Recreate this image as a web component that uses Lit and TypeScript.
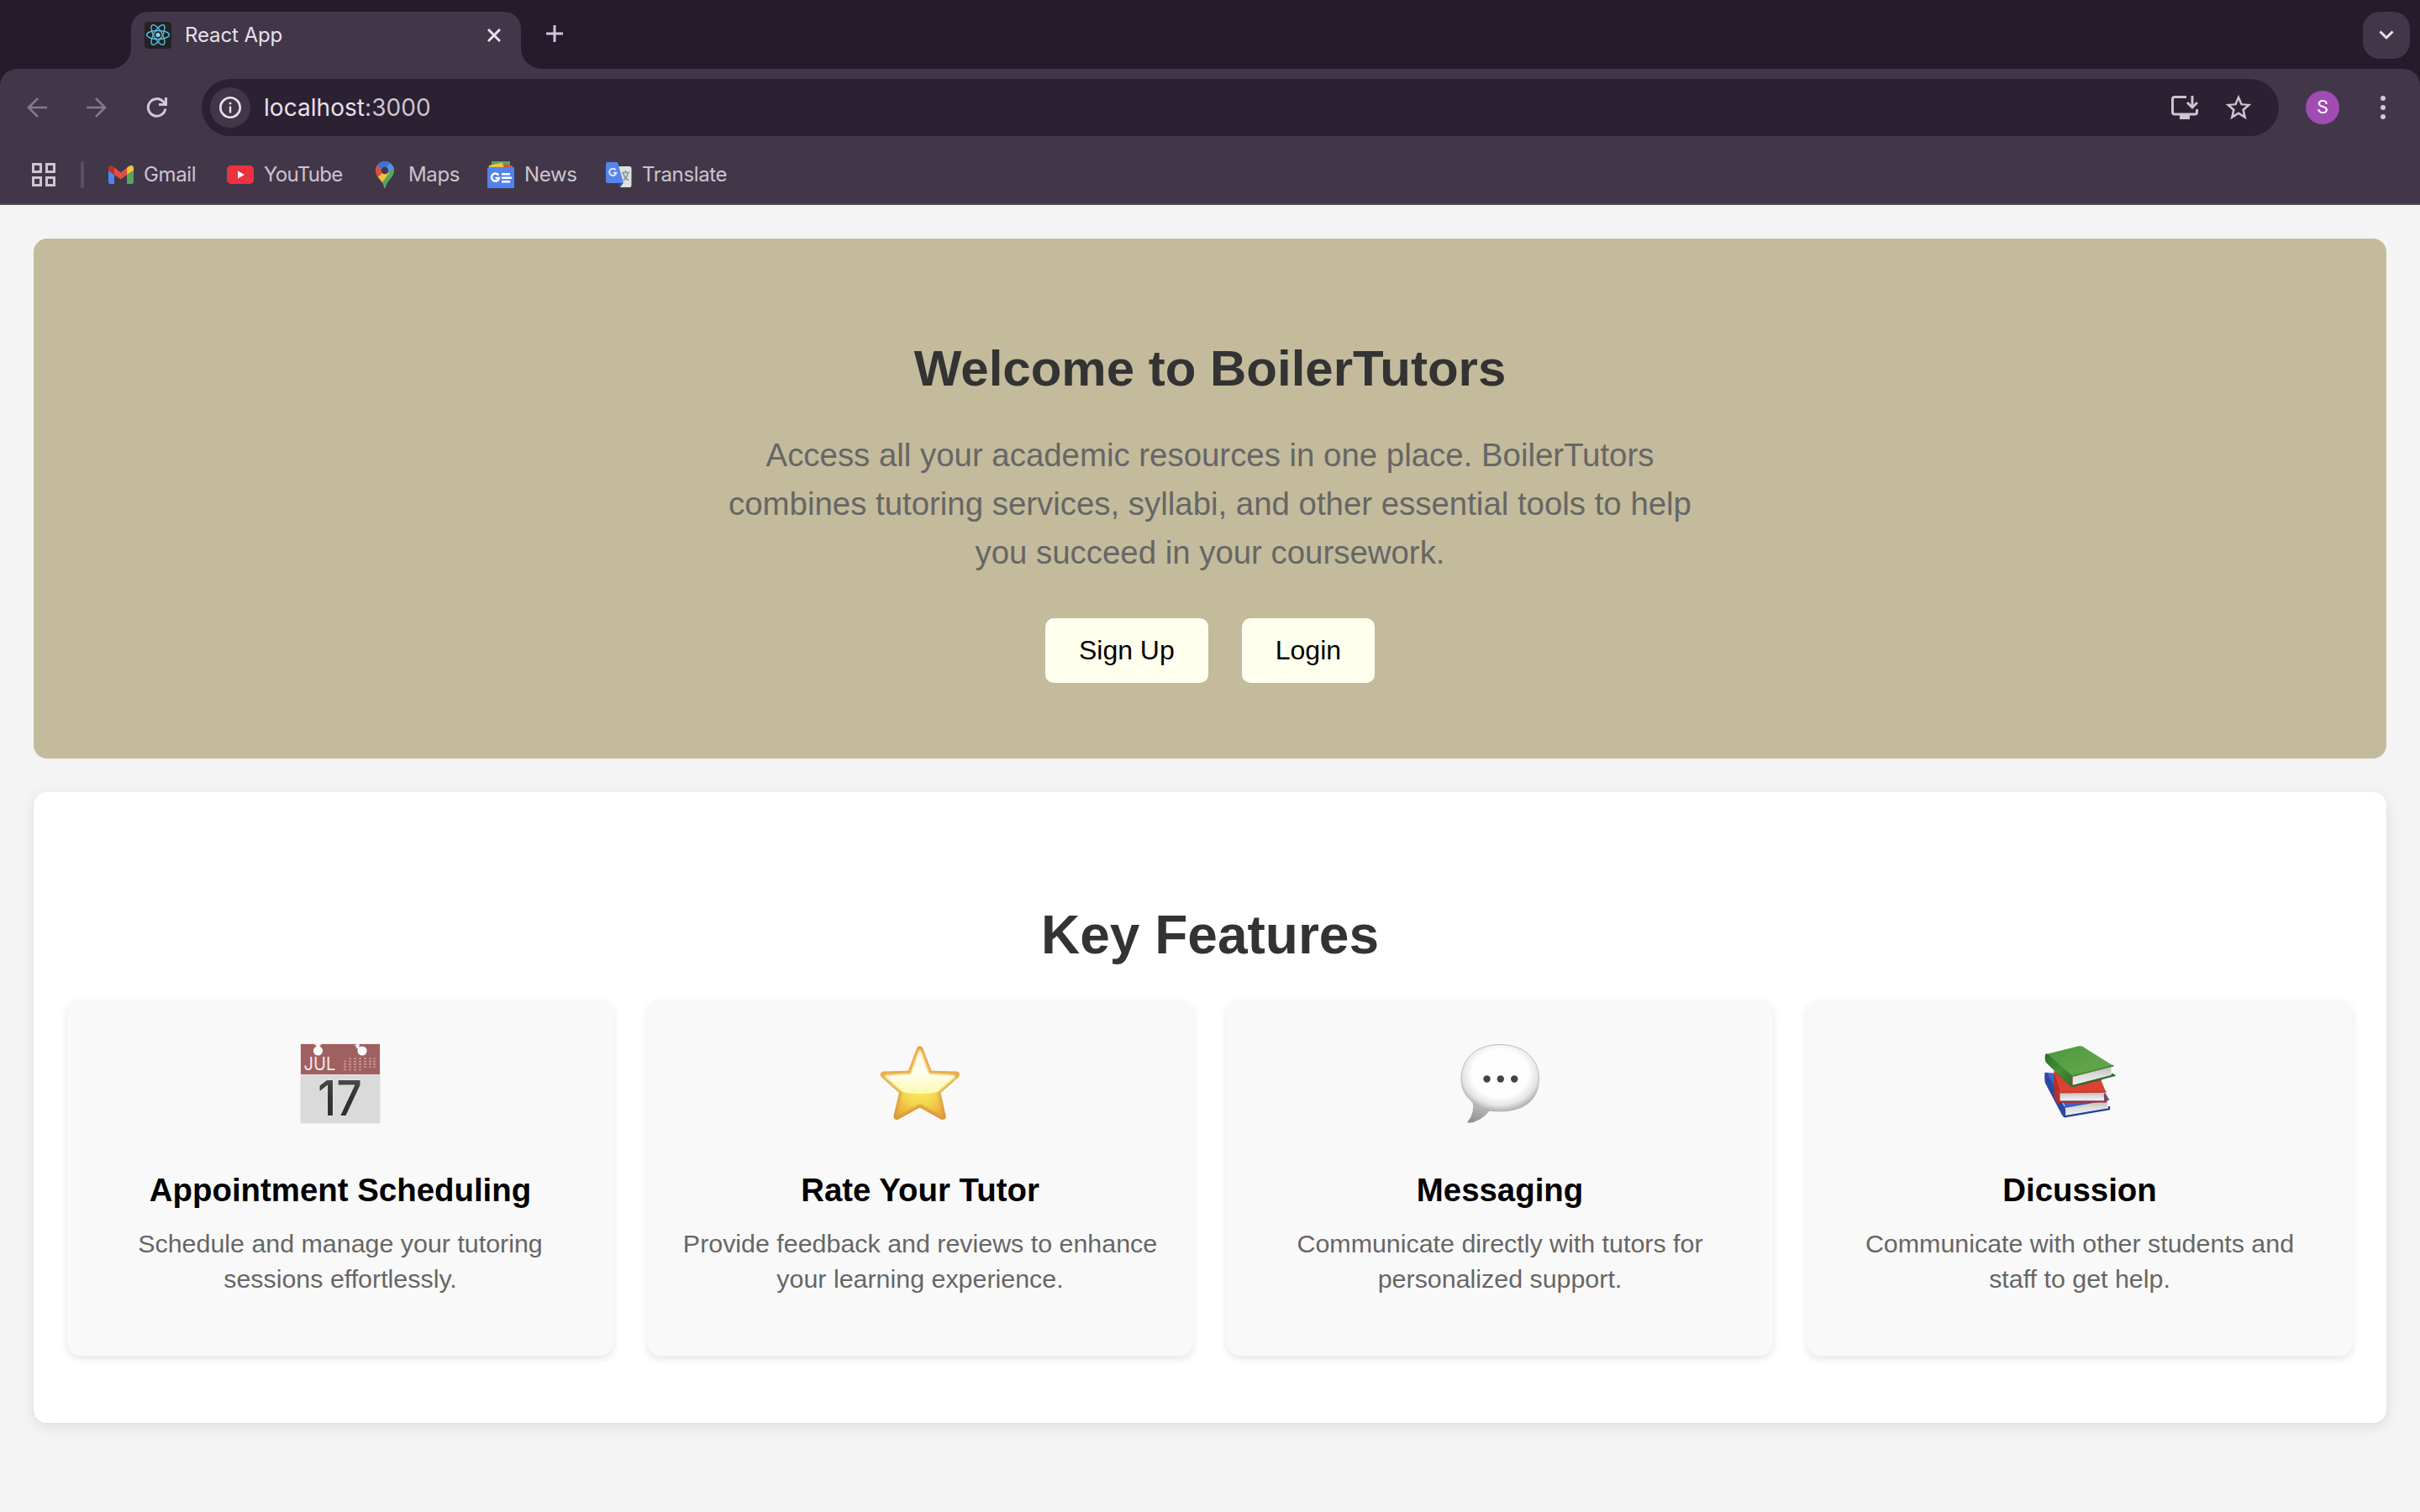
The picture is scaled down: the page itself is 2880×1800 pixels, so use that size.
import { LitElement, html, css, svg } from "lit";
import { customElement, property } from "lit/decorators.js";

const ICONS: Record<string, unknown> = {
  react: svg`<svg width="32" height="32" viewBox="0 0 32 32">
    <rect width="32" height="32" rx="4" fill="#222"/>
    <g fill="none" stroke="#61c5e8" stroke-width="1.3">
      <ellipse cx="16" cy="15.5" rx="13.4" ry="5"/>
      <ellipse cx="16" cy="15.5" rx="13.4" ry="5" transform="rotate(60 16 15.5)"/>
      <ellipse cx="16" cy="15.5" rx="13.4" ry="5" transform="rotate(120 16 15.5)"/>
    </g><circle cx="16" cy="15.5" r="2.6" fill="#7cd5f4"/></svg>`,
  close: svg`<svg width="16" height="16" viewBox="0 0 16 16" stroke="#e9e0ea" stroke-width="3" fill="none"><path d="M1 1L15 15M15 1L1 15"/></svg>`,
  plus: svg`<svg width="20" height="20" viewBox="0 0 20 20" stroke="#d2c5dc" stroke-width="3" fill="none"><path d="M10 0V20M0 10H20"/></svg>`,
  chevron: svg`<svg width="18" height="12" viewBox="0 0 18 12" stroke="#e9e0ea" stroke-width="3" fill="none"><path d="M1.5 1.5L9 9L16.500 1.500"/></svg>`,
  back: svg`<svg width="24" height="24" viewBox="0 0 24 24" stroke="#85798c" stroke-width="2.600" fill="none"><path d="M24 12H2M13 1L2 12L13 23"/></svg>`,
  forward: svg`<svg width="24" height="24" viewBox="0 0 24 24" stroke="#85798c" stroke-width="2.600" fill="none"><path d="M0 12H22M11 1L22 12L11 23"/></svg>`,
  reload: svg`<svg width="26" height="26" viewBox="0 0 26 26" fill="none" stroke="#d2c5dc" stroke-width="3"><path d="M22.800 14.500A10.300 10.300 0 1 1 20 5.700L23.500 9"/><path d="M23.500 1V9.500H15"/></svg>`,
  info: svg`<svg width="28" height="28" viewBox="0 0 28 28" fill="none" stroke="#e9e0ea"><circle cx="14" cy="14" r="11.700" stroke-width="2.600"/><path d="M14 12.500V20.500" stroke-width="2.400"/><path d="M14 7.800V10.300" stroke-width="2.600"/></svg>`,
  install: svg`<svg width="32" height="30" viewBox="0 0 32 30" fill="none" stroke="#cdc4cf" stroke-width="3"><path d="M18 2.500H4Q1.500 2.500 1.500 5V20.500Q1.500 23 4 23H28Q30.500 23 30.500 20.500V17"/><path d="M25 1V14M19 9L25 15L31 9"/><path d="M10 24H22V29H10Z" fill="#cdc4cf" stroke="none"/></svg>`,
  star: svg`<svg width="34" height="34" viewBox="0 0 24 24" fill="#cdc4cf"><path d="M22.800 9.240l-7.640-.66L12 1.300 8.840 8.590 1.200 9.240l5.800 5.030L5.270 22 12 17.870 18.730 22l-1.730-7.730 5.800-5.030zM12 15.700l-4.070 2.460 1.080-4.630-3.590-3.110 4.740-.41L12 5.650l1.850 4.370 4.740.41-3.590 3.110 1.080 4.630L12 15.700z"/></svg>`,
  dots: svg`<svg width="6" height="28" viewBox="0 0 6 28" fill="#d2c5dc"><circle cx="3" cy="3" r="3"/><circle cx="3" cy="14" r="3"/><circle cx="3" cy="25" r="3"/></svg>`,
  apps: svg`<svg width="28" height="28" viewBox="0 0 28 28" fill="none" stroke="#cdc4cf" stroke-width="3"><path d="M1.500 1.500h9v9h-9zM17.500 1.500h9v9h-9zM1.500 17.500h9v9h-9zM17.500 17.500h9v9h-9z"/></svg>`,
  gmail: svg`<svg width="30" height="22" viewBox="0 0 30 22"><path d="M0 6L7 11V22H2Q0 22 0 20Z" fill="#4f86ee"/><path d="M30 6L22 11V22H27.500Q30 22 30 20Z" fill="#57a65a"/><path d="M0 6V3Q0 0 3 0Q4.200 0 5.200.8L7 2.200V11Z" fill="#b5332a"/><path d="M30 6V3Q30 0 27 0Q25.500 0 24.500.8L22 2.800V11Z" fill="#f3c13d"/><path d="M7 2.200L14.700 8.300L22 2.800V11L14.700 16.500L7 11Z" fill="#dc5040"/></svg>`,
  youtube: svg`<svg width="32" height="22" viewBox="0 0 32 22"><rect width="32" height="22" rx="5" fill="#eb323f"/><path d="M13 6.500L21 11L13 15.500Z" fill="#fff"/></svg>`,
  maps: svg`<svg width="22" height="32" viewBox="0 0 22 32"><defs><clipPath id="pin"><path d="M11 0C17 0 22 5 22 11C22 19 13.500 22 11.800 31Q11 33 10.200 31C8.500 22 0 19 0 11C0 5 5 0 11 0Z"/></clipPath></defs><g clip-path="url(#pin)"><rect width="22" height="32" fill="#57a65a"/><path d="M-2 22L11 7L17 14L6 27Z" fill="#f3c13d"/><path d="M-2 2L3 4L11 11L0 22L-2 16Z" fill="#dc5040"/><path d="M2 4L11 -2L18 1L9 12Z" fill="#3b72de"/><path d="M11 11L18 1L24 3V5L14 15Z" fill="#5a8df2"/><path d="M22 5V32H6L10 23Z" fill="#57a65a"/></g><circle cx="11" cy="11" r="4.200" fill="#413749"/></svg>`,
  news: svg`<svg width="32" height="32" viewBox="0 0 32 32"><path d="M5 0H27V8H5Z" fill="#57a65a"/><path d="M18 3L30 5.500V9H18Z" fill="#dc5040"/><path d="M2 5L18 1.500L20 8H2Z" fill="#f3c13d"/><rect y="7" width="32" height="25" rx="1" fill="#5183ee"/><path d="M13.300 16.500A4.500 4.500 0 1 0 14 20H9.500" fill="none" stroke="#fff" stroke-width="2.400"/><path d="M17 15.300H27M17 19.800H29M17 24.200H27" stroke="#fff" stroke-width="2.500"/></svg>`,
  translate: svg`<svg width="32" height="32" viewBox="0 0 32 32"><path d="M12 6H29Q31.500 6 31.500 8V29Q31.500 31 29.500 31H18Z" fill="#dfe0df"/><path d="M20 13.500H29M24.500 11V13.500M21.500 13.500Q23 20 28 22.500M27.500 13.500Q26 20 21.500 23" fill="none" stroke="#8b9698" stroke-width="1.700"/><path d="M16 25.500H22L18 31Z" fill="#3248ae"/><path d="M3 1H15L22 26H3Q1 26 1 24V3Q1 1 3 1Z" fill="#5585ea"/><path d="M12.700 10.300A4.200 4.200 0 1 0 13.500 13.800H9.800" fill="none" stroke="#dfe8fb" stroke-width="1.900"/></svg>`,
};

const miniDays = [
  [0, 3], [6, 0], [12, 0], [18, 0], [24, 0], [30, 0], [35, 0],
].map(([x, y], c) => svg`<path d="M${53.500 + x} ${17.500 + y}V${c > 3 ? 30 : 33}" stroke="#d3a9a8" stroke-width="2.200" stroke-dasharray="1.600 1.700"/>`);

const ART: Record<string, unknown> = {
  calendar: svg`<svg width="96" height="96" viewBox="0 0 96 96">
    <defs><linearGradient id="num" x1="0" y1="0" x2="0" y2="1"><stop offset="0" stop-color="#555"/><stop offset=".5" stop-color="#333"/><stop offset="1" stop-color="#2e2e2e"/></linearGradient></defs>
    <rect x="0.500" y="0.500" width="95" height="95" fill="#e8e0e0"/>
    <rect x="1" y="1" width="94" height="36" fill="#a06060"/>
    <rect x="1" y="38" width="94" height="56.500" fill="#dadada"/>
    <circle cx="21.500" cy="9" r="5.600" fill="#fcfcfc"/><path d="M19.500 0H23.500V5H19.500ZM17.500 1.200H25.500V2.500H17.500Z" fill="#fcfcfc"/>
    <circle cx="74" cy="9" r="5.600" fill="#fcfcfc"/><path d="M67 0H70.500V6H67ZM64 2L70 1.500V5Z" fill="#fcfcfc"/>
    ${miniDays}
    <text x="4.500" y="32" font-family="Inter, sans-serif" font-size="21.500" font-weight="400" fill="#f1e7e7" textLength="38" lengthAdjust="spacingAndGlyphs">JUL</text>
    <text x="21" y="86" font-family="Inter, sans-serif" font-size="57" font-weight="500" fill="url(#num)" stroke="#eee" stroke-width="1" paint-order="stroke" textLength="53" lengthAdjust="spacingAndGlyphs">17</text></svg>`,
  star: svg`<svg width="96" height="96" viewBox="0 0 96 96">
    <defs><linearGradient id="sg" gradientUnits="userSpaceOnUse" x1="0" y1="3" x2="0" y2="92"><stop offset="0" stop-color="#f0a444"/><stop offset=".4" stop-color="#e9b04a"/><stop offset=".62" stop-color="#dfb344"/><stop offset="1" stop-color="#d9963a"/></linearGradient>
    <linearGradient id="si" gradientUnits="userSpaceOnUse" x1="0" y1="8" x2="0" y2="60"><stop offset="0" stop-color="#fffbe0"/><stop offset=".5" stop-color="#fffff2"/><stop offset="1" stop-color="#fdf8ae"/></linearGradient>
    <radialGradient id="sl" gradientUnits="userSpaceOnUse" cx="47.700" cy="55" r="40"><stop offset="0" stop-color="#fbe95e"/><stop offset=".45" stop-color="#f5d850"/><stop offset="1" stop-color="#eba33c"/></radialGradient>
    <clipPath id="sc"><path d="M0 0H96V50Q72 60 47.700 60Q24 60 0 50Z"/></clipPath>
    <filter id="sb"><feGaussianBlur stdDeviation="1.300"/></filter></defs>
    <path d="M47.700 7.500L58.700 36.500L91 37.500L68.200 57.500L74.700 87L47.700 72L20.500 87L27.300 57.500L4.800 37.500L36.800 36.500Z" fill="url(#sg)" stroke="url(#sg)" stroke-width="8" stroke-linejoin="round"/>
    <path d="M47.700 10L57.500 38L89 38.500L67 57.500L73.500 85L47.700 70.500L21.700 85L28.300 57.500L7 38.500L38 38Z" fill="url(#sl)" stroke="url(#sl)" stroke-width="3" stroke-linejoin="round" filter="url(#sb)"/>
    <g clip-path="url(#sc)"><path d="M47.700 10L57.500 38L88 39.500L66 58L47.700 66L29.500 58L8 39.500L38 38Z" fill="url(#si)" stroke="url(#si)" stroke-width="3.600" stroke-linejoin="round" filter="url(#sb)"/></g></svg>`,
  message: svg`<svg width="96" height="96" viewBox="0 0 96 96">
    <defs><radialGradient id="mb" cx=".5" cy=".43" r=".59"><stop offset="0" stop-color="#fff"/><stop offset=".62" stop-color="#fdfdfd"/><stop offset=".82" stop-color="#e4e4e4"/><stop offset="1" stop-color="#a6a6a6"/></radialGradient>
    <linearGradient id="mt" x1=".6" y1="0" x2=".3" y2="1"><stop offset="0" stop-color="#c8c8c8"/><stop offset="1" stop-color="#8e8e8e"/></linearGradient></defs>
    <path d="M15 68Q19 82 9.500 93.500Q8.500 95 11 94.800Q25 94 37 79Z" fill="url(#mt)"/>
    <path d="M48 1.500C77 1.500 94.500 19 94.500 42C94.500 68 76 81 48 81C44 81 40 81 36 80.300C27 78 21 75 15.500 70C6 62 2 53 2 42C2 19 19 1.500 48 1.500Z" fill="url(#mb)" stroke="#b0b0b0" stroke-width=".8"/>
    <g fill="#434343"><circle cx="32.500" cy="42.500" r="4.200"/><circle cx="48.800" cy="42.500" r="4.200"/><circle cx="65.200" cy="42.500" r="4.200"/></g></svg>`,
  books: svg`<svg width="96" height="96" viewBox="0 0 96 96">
    <defs><linearGradient id="bg" x1="0" y1="0" x2="1" y2="1"><stop offset="0" stop-color="#4c9a3c"/><stop offset="1" stop-color="#6aa852"/></linearGradient>
    <linearGradient id="bs" x1="0" y1="0" x2="1" y2="1"><stop offset="0" stop-color="#2f6b28"/><stop offset=".5" stop-color="#458f38"/><stop offset="1" stop-color="#2f6b28"/></linearGradient>
    <linearGradient id="bp" x1="0" y1="0" x2="0" y2="1"><stop offset="0" stop-color="#bdbdbd"/><stop offset=".5" stop-color="#dedede"/><stop offset="1" stop-color="#f2f2f2"/></linearGradient></defs>
    <path d="M7 34.700L22 36L79 59.700L83 67.300L31.300 76.300Z" fill="#4263c8"/>
    <path d="M31.500 76L81 67.500V78L31.500 87Z" fill="url(#bp)"/>
    <path d="M6.300 36Q6.500 34.500 9 34.700L29 74Q32 76 31 88Q28.500 88.500 27 85.500L7 47.500Q6 45 6.300 36Z" fill="#2d499f"/>
    <path d="M30 76L83 66.800" stroke="#3b5cc2" stroke-width="2" fill="none"/><path d="M29.500 87.300L83 78.300V75" stroke="#233d99" stroke-width="2.200" fill="none"/>
    <path d="M17.300 33L60 40L73 43L79 57.500L23 58.500Z" fill="#da4233"/>
    <path d="M22.500 58.500H77V68.500H22.500Z" fill="url(#bp)"/>
    <path d="M17.300 33L24.500 57V69.800Q20.500 70.500 18.800 67Q17 62 17.300 33Z" fill="#b32f27"/>
    <path d="M22 58.300L79.500 57.600" stroke="#cf3b2e" stroke-width="2.200"/><path d="M20.500 69.800L79 69.300V64L77 62" stroke="#b22d26" stroke-width="2.300" fill="none"/>
    <path d="M19 36L40 51L76 44L73 42L60 34Z" fill="#7c1d18" opacity=".35"/>
    <path d="M8 13L47 3.300Q49.500 2.800 52 4.200L88.300 27L39.700 39.500Z" fill="url(#bg)"/>
    <path d="M39.700 39.500L85.500 27.500V38L39.700 50.500Z" fill="url(#bp)"/>
    <path d="M9 12.300Q6.500 12.500 6.800 16Q6.300 21 8 23L36 50.500Q39 52.500 39.500 51Q37.500 45 39.700 39Z" fill="url(#bs)"/>
    <path d="M38.500 39.300L88.300 26.500" stroke="#428a35" stroke-width="1.900"/><path d="M38 51.300L88.500 38.300L86 36.500" stroke="#2e6d28" stroke-width="2.400" fill="none"/></svg>`,
};

@customElement("browser-chrome")
class BrowserChrome extends LitElement {
  static styles = css`
    :host { display: block; background: #241b2b; font-family: Inter, "Liberation Sans", sans-serif; color: #e9e0ea; }
    svg { display: block; }
    .strip { height: 82px; box-sizing: border-box; padding: 14px 12px 0 156px; display: flex; align-items: flex-start; }
    .tab { position: relative; width: 464px; height: 68px; box-sizing: border-box; padding: 0 24px 12px 16px; border-radius: 20px 20px 0 0; background: #413749; display: flex; align-items: center; }
    .tab::before, .tab::after { content: ""; position: absolute; bottom: 0; width: 24px; height: 24px; }
    .tab::before { left: -24px; background: radial-gradient(circle at 0 0, transparent 23.500px, #413749 24px); }
    .tab::after { right: -24px; background: radial-gradient(circle at 100% 0, transparent 23.500px, #413749 24px); }
    .title { flex: 1; margin-left: 16px; font-size: 24px; font-weight: 430; line-height: 32px; letter-spacing: -0.1px; }
    .new { padding: 16px 30px; }
    .search { margin-left: auto; width: 56px; height: 56px; border-radius: 20px; background: #413749; display: flex; align-items: center; justify-content: center; }
    .panel { background: #413749; border-radius: 20px 20px 0 0; border-bottom: 2px solid #4b474e; height: 160px; }
    .bar { display: flex; align-items: center; height: 92px; box-sizing: border-box; padding-left: 32px; }
    .nav { display: flex; width: 208px; gap: 47px; align-items: center; }
    .omni { width: 2472px; height: 68px; box-sizing: border-box; border-radius: 34px; background: #2a2132; display: flex; align-items: center; padding: 0 31px 0 10px; }
    .site { width: 48px; height: 48px; border-radius: 50%; background: #413749; display: flex; align-items: center; justify-content: center; }
    .url { flex: 1; margin-left: 16px; font-size: 28px; line-height: 36px; letter-spacing: 0.05px; }
    .port { color: #cdc4cf; }
    .act { margin-left: 31px; }
    .avatar { margin-left: 32px; width: 40px; height: 40px; border-radius: 50%; background: #a04cb5; color: #fff; font: 22px/40px Roboto, sans-serif; text-align: center; }
    .menu { margin-left: 49px; }
    .marks { display: grid; grid-template-columns: 58px 33px 141px 177px 133px 140px 200px; padding-left: 38px; height: 68px; align-items: center; color: #cdc4cf; }
    .sep { width: 4px; height: 32px; border-radius: 2px; background: #5a4f64; }
    .mark { display: flex; align-items: center; font-size: 24px; line-height: 32px; font-weight: 430; letter-spacing: -0.35px; }
    .label { margin-left: 12px; }
    .mark.gap-lg .label { margin-left: 17px; }
    .mark.tight .label { letter-spacing: -0.7px; }
  `;
  private marks: [string, string, string][] = [
    ["gmail", "Gmail", ""], ["youtube", "YouTube", "tight"], ["maps", "Maps", "gap-lg"], ["news", "News", ""], ["translate", "Translate", ""],
  ];
  render() {
    return html`
      <div class="strip">
        <div class="tab">${ICONS.react}<span class="title">React App</span>${ICONS.close}</div>
        <div class="new">${ICONS.plus}</div>
        <div class="search">${ICONS.chevron}</div>
      </div>
      <div class="panel">
        <div class="bar">
          <div class="nav">${ICONS.back}${ICONS.forward}${ICONS.reload}</div>
          <div class="omni">
            <div class="site">${ICONS.info}</div>
            <div class="url">localhost<span class="port">:3000</span></div>
            ${ICONS.install}<div class="act">${ICONS.star}</div>
          </div>
          <div class="avatar">S</div>
          <div class="menu">${ICONS.dots}</div>
        </div>
        <div class="marks">
          ${ICONS.apps}<div class="sep"></div>
          ${this.marks.map(([icon, label, cls]) => html`<div class="mark ${cls}">${ICONS[icon]}<span class="label">${label}</span></div>`)}
        </div>
      </div>`;
  }
}

@customElement("feature-card")
class FeatureCard extends LitElement {
  @property() art = "";
  @property() heading = "";
  @property() text = "";
  static styles = css`
    :host { display: flex; flex-direction: column; align-items: center; height: 424px; box-sizing: border-box; padding: 52px 40px 0; border-radius: 16px; background: #f9f9f9; box-shadow: 0 4px 10px rgba(0, 0, 0, 0.1); text-align: center; }
    svg { display: block; overflow: visible; }
    .heading { margin: 56px 0 19px; font-size: 38.4px; line-height: 46px; font-weight: 700; color: #000; }
    .text { margin: 0; font-size: 30.4px; line-height: 42px; color: #666; }
  `;
  render() {
    return html`${ART[this.art]}<h3 class="heading">${this.heading}</h3><p class="text">${this.text}</p>`;
  }
}

@customElement("app-root")
class AppRoot extends LitElement {
  static styles = css`
    :host { display: block; min-height: 1800px; background: #f4f4f4; font-family: "Liberation Sans", Arial, sans-serif; }
    .page { padding: 40px; display: flex; flex-direction: column; gap: 40px; }
    .hero { height: 619px; box-sizing: border-box; padding-top: 119px; border-radius: 16px; background: #c3bb9c; display: flex; flex-direction: column; align-items: center; text-align: center; }
    .title { margin: 0; font-size: 60px; line-height: 72px; color: #333; }
    .lead { margin: 38px 0 49px; width: 1200px; font-size: 38.4px; line-height: 58px; color: #666; }
    .buttons { display: flex; gap: 40px; }
    .button { border: 0; border-radius: 10px; padding: 20px 40px; background: #ffffee; color: #000; font: 32px/37px "Liberation Sans", Arial, sans-serif; }
    .features { height: 751px; box-sizing: border-box; padding: 132px 40px 0; border-radius: 16px; background: #fff; box-shadow: 0 4px 16px rgba(0, 0, 0, 0.1); }
    .subtitle { margin: 0 0 39px; font-size: 64px; line-height: 76px; color: #333; text-align: center; }
    .grid { display: grid; grid-template-columns: repeat(4, 1fr); gap: 40px; }
  `;
  private features = [
    ["calendar", "Appointment Scheduling", "Schedule and manage your tutoring sessions effortlessly."],
    ["star", "Rate Your Tutor", "Provide feedback and reviews to enhance your learning experience."],
    ["message", "Messaging", "Communicate directly with tutors for personalized support."],
    ["books", "Dicussion", "Communicate with other students and staff to get help."],
  ];
  render() {
    return html`
      <browser-chrome></browser-chrome>
      <main class="page">
        <section class="hero">
          <h1 class="title">Welcome to BoilerTutors</h1>
          <p class="lead">Access all your academic resources in one place. BoilerTutors combines tutoring services, syllabi, and other essential tools to help you succeed in your coursework.</p>
          <div class="buttons"><button class="button">Sign Up</button><button class="button">Login</button></div>
        </section>
        <section class="features">
          <h2 class="subtitle">Key Features</h2>
          <div class="grid">
            ${this.features.map(([art, heading, text]) => html`<feature-card .art=${art} .heading=${heading} .text=${text}></feature-card>`)}
          </div>
        </section>
      </main>`;
  }
}
